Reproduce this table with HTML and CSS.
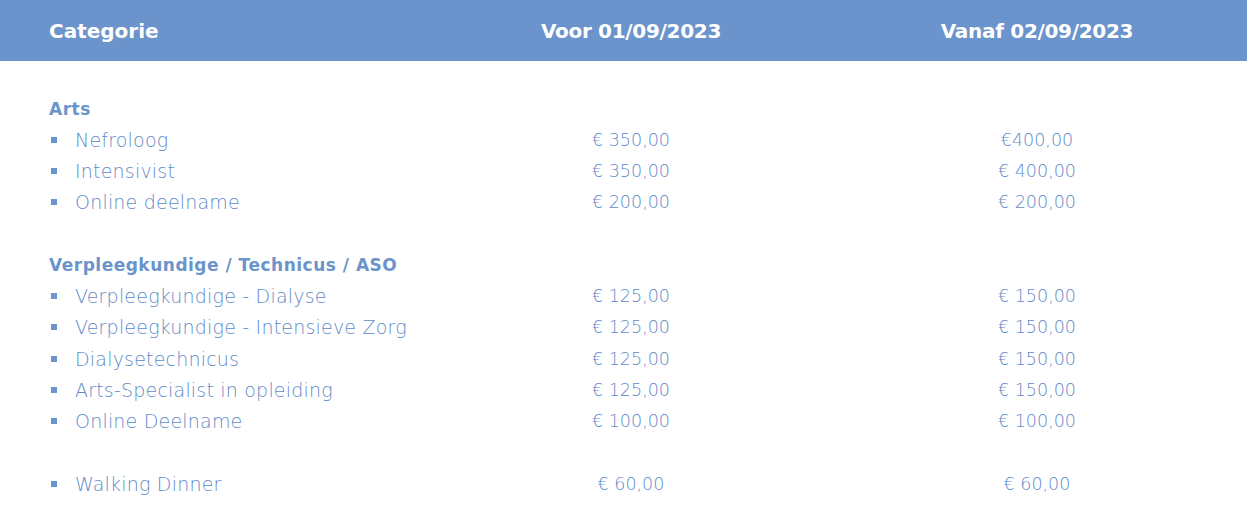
FILE: index.html
```html
<!DOCTYPE html>
<html lang="nl">
<head>
<meta charset="utf-8">
<title>Tarieven</title>
<link rel="stylesheet" href="styles.css">
</head>
<body>
<div class="table">
  <div class="head">
    <div class="hcell cat">Categorie</div>
    <div class="hcell">Voor 01/09/2023</div>
    <div class="hcell">Vanaf 02/09/2023</div>
  </div>
  <div class="body">
    <div class="row group"><div class="cat">Arts</div><div></div><div></div></div>
    <div class="row item"><div class="cat"><span class="bullet"></span>Nefroloog</div><div class="price">€ 350,00</div><div class="price">€400,00</div></div>
    <div class="row item"><div class="cat"><span class="bullet"></span>Intensivist</div><div class="price">€ 350,00</div><div class="price">€ 400,00</div></div>
    <div class="row item"><div class="cat"><span class="bullet"></span>Online deelname</div><div class="price">€ 200,00</div><div class="price">€ 200,00</div></div>
    <div class="row spacer"></div>
    <div class="row group"><div class="cat">Verpleegkundige / Technicus / ASO</div><div></div><div></div></div>
    <div class="row item"><div class="cat"><span class="bullet"></span>Verpleegkundige - Dialyse</div><div class="price">€ 125,00</div><div class="price">€ 150,00</div></div>
    <div class="row item"><div class="cat"><span class="bullet"></span>Verpleegkundige - Intensieve Zorg</div><div class="price">€ 125,00</div><div class="price">€ 150,00</div></div>
    <div class="row item"><div class="cat"><span class="bullet"></span>Dialysetechnicus</div><div class="price">€ 125,00</div><div class="price">€ 150,00</div></div>
    <div class="row item"><div class="cat"><span class="bullet"></span>Arts-Specialist in opleiding</div><div class="price">€ 125,00</div><div class="price">€ 150,00</div></div>
    <div class="row item"><div class="cat"><span class="bullet"></span>Online Deelname</div><div class="price">€ 100,00</div><div class="price">€ 100,00</div></div>
    <div class="row spacer"></div>
    <div class="row item"><div class="cat"><span class="bullet"></span>Walking Dinner</div><div class="price">€ 60,00</div><div class="price">€ 60,00</div></div>
  </div>
</div>
</body>
</html>
```
FILE: styles.css
```css
html, body {
  margin: 0;
  padding: 0;
  background: #ffffff;
}
body {
  font-family: "DejaVu Sans", "Liberation Sans", sans-serif;
  color: #5f8bc8;
}
.head, .row {
  display: grid;
  grid-template-columns: 425px 412px 400px;
}
.head {
  height: 61px;
  background: #6a94cb;
  color: #ffffff;
  font-weight: bold;
  font-size: 20px;
  align-items: center;
}
.hcell {
  text-align: center;
  padding-top: 1px;
  letter-spacing: -0.3px;
}
.hcell.cat {
  text-align: left;
  padding-left: 49px;
  letter-spacing: 0;
}
.body {
  padding-top: 32px;
}
.row {
  height: 31.25px;
  align-items: center;
  font-size: 17.5px;
  font-weight: 300;
}
.row .cat {
  padding-left: 49px;
  display: flex;
  align-items: center;
}
.item .cat {
  font-size: 19px;
  letter-spacing: 0.2px;
  padding-left: 51px;
}
.group {
  font-weight: bold;
  color: #6a94cb;
}
.group .cat {
  font-size: 17px;
  letter-spacing: 0.5px;
}
.bullet {
  display: inline-block;
  width: 6px;
  height: 6px;
  background: #6a94cb;
  margin-right: 18px;
}
.price {
  text-align: center;
}
```
